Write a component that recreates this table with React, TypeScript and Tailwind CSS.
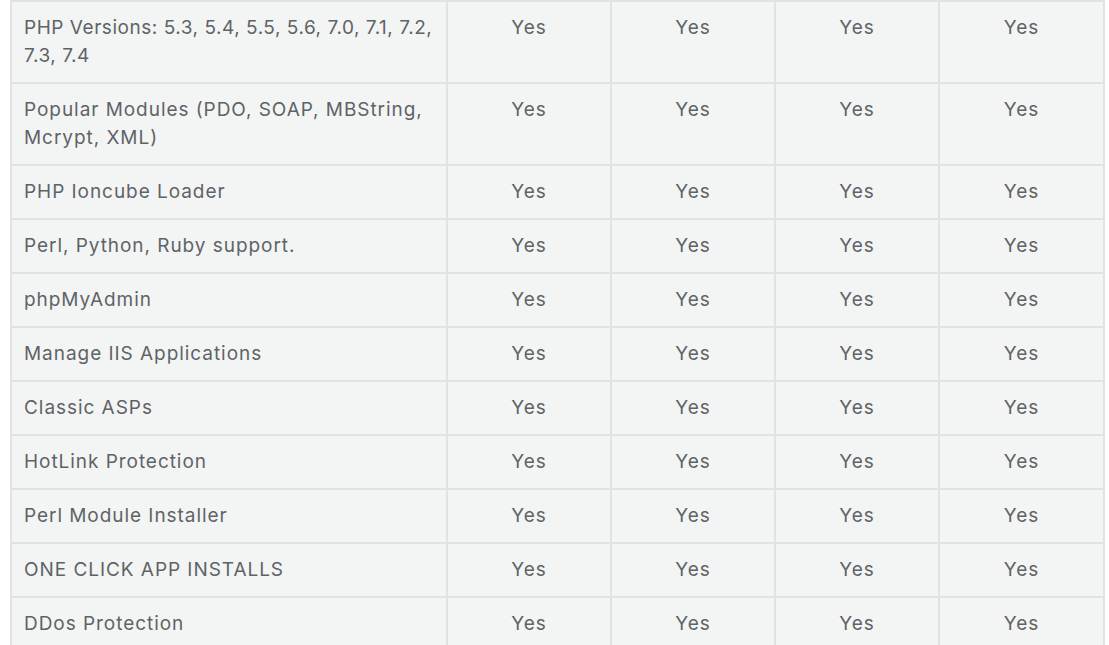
const rows: string[] = [
  'PHP Versions: 5.3, 5.4, 5.5, 5.6, 7.0, 7.1, 7.2, 7.3, 7.4',
  'Popular Modules (PDO, SOAP, MBString, Mcrypt, XML)',
  'PHP Ioncube Loader',
  'Perl, Python, Ruby support.',
  'phpMyAdmin',
  'Manage IIS Applications',
  'Classic ASPs',
  'HotLink Protection',
  'Perl Module Installer',
  'ONE CLICK APP INSTALLS',
  'DDos Protection',
];

export default function App() {
  return (
    <div className="bg-white h-[645px] overflow-hidden pl-[10px] font-['Inter',sans-serif]">
      <table className="table-fixed border-collapse w-[1093px] text-[19px] leading-[28px] tracking-[0.05em] text-[#5f6366]">
        <colgroup>
          <col className="w-[436px]" />
          <col className="w-[164px]" />
          <col className="w-[164px]" />
          <col className="w-[164px]" />
          <col className="w-[165px]" />
        </colgroup>
        <tbody>
          {rows.map((feature, idx) => (
            <tr key={feature}>
              <td
                className={
                  idx === 0
                    ? 'border-2 border-[#e0e3e3] bg-[#f3f5f5] pl-3 pr-0.5 py-3 align-top tracking-[0.028em]'
                    : 'border-2 border-[#e0e3e3] bg-[#f3f5f5] pl-3 pr-0.5 py-3 align-top'
                }
              >
                {feature}
              </td>
              {[0, 1, 2, 3].map((i) => (
                <td key={i} className="border-2 border-[#e0e3e3] bg-[#f3f5f5] px-3 py-3 align-top text-center">
                  Yes
                </td>
              ))}
            </tr>
          ))}
        </tbody>
      </table>
    </div>
  );
}
